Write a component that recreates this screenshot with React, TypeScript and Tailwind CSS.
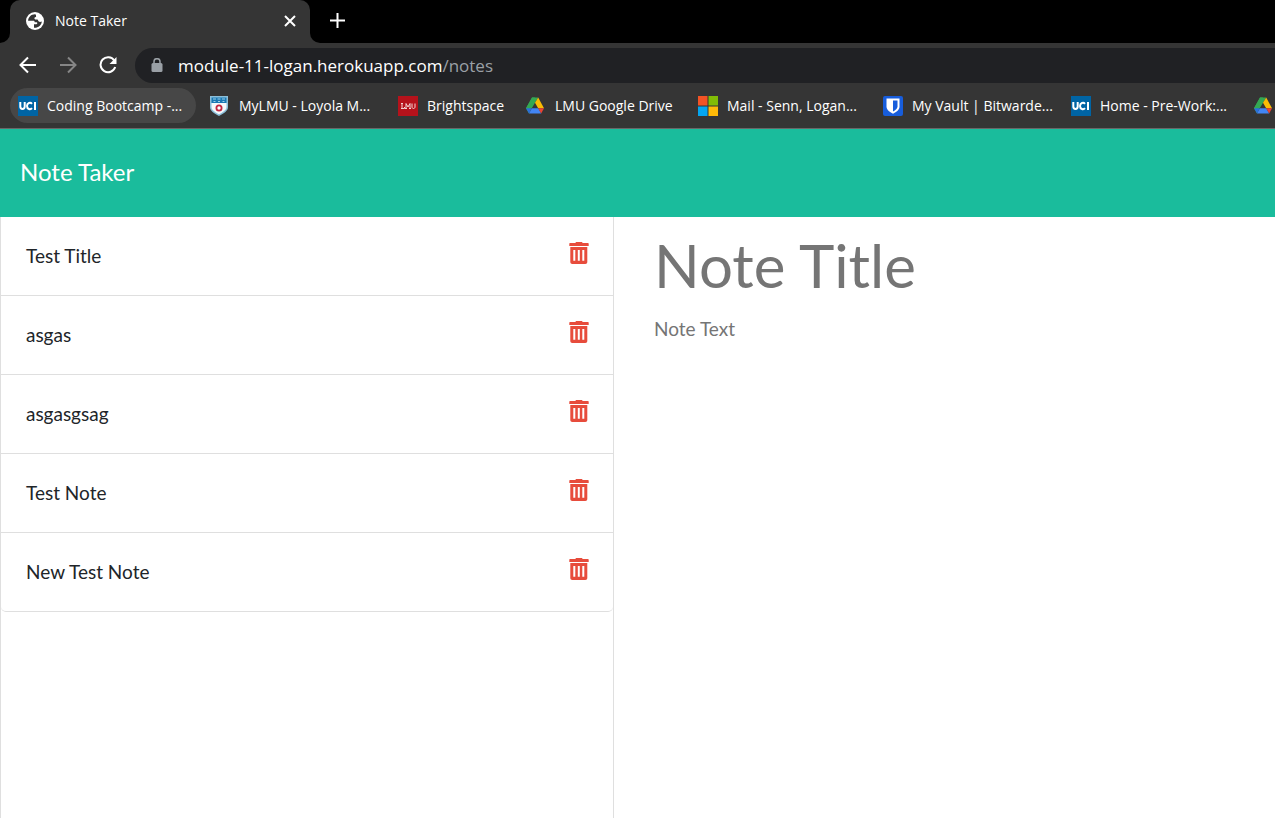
import type { ReactNode } from "react";

const chromeFont = "font-['Open_Sans','Noto_Sans',sans-serif]";

function Globe() {
  return (
    <svg viewBox="0 0 18 18" className="size-[18px] shrink-0" aria-hidden="true">
      <circle cx="9" cy="9" r="9" fill="#fff" />
      <path
        d="M9.3 2.2C5.3 2 2.2 5 2.1 8.7h5.1c1.2 0 1.5.7 1.5 1.6h1.9c1 0 1 1.9-.1 1.9H8v3.6c4 .4 7.6-2.5 7.8-6.3-.9.5-2.2.7-3 .1-.7-.5-.6-1.5-1.3-2-.8-.4-2.3.3-2.9-.7-.5-1 .3-1.6 1.1-1.8.7-.2.2-1.400.3-2.200z"
        fill="#353535"
      />
      <path d="M8 12.200 7.900 15.800C5 15.400 3.100 13.600 2.400 11Z" fill="#fff" />
    </svg>
  );
}

function Uci() {
  return (
    <svg viewBox="0 0 20 20" className="size-5 shrink-0" aria-hidden="true">
      <rect width="20" height="20" fill="#0064a4" />
      <g fill="none" stroke="#fff" strokeWidth="2">
        <path d="M2.300 6v4.600c0 3.200 4.400 3.200 4.400 0V6" />
        <path d="M14 7.800c-1.500-1.700-5-1.100-5 2.200s3.500 3.900 5 2.200" />
        <path d="M17 6v8" />
      </g>
    </svg>
  );
}

function Crest() {
  return (
    <svg viewBox="0 0 20 20" className="size-5 shrink-0" aria-hidden="true">
      <path d="M0 0h18v11c0 4-4 6.200-9 9-5-2.800-9-5-9-9z" fill="#8cbfda" />
      <path d="M1.500 7h15v4c0 3.200-3.500 5-7.500 7.300C5 16 1.500 14.200 1.500 11z" fill="#f4f8fb" />
      <path d="M1.500 1.500h15V7h-15z" fill="#1978b5" />
      <path d="M3 3h3M7.500 3h3M12 3h3M3.500 5.500h2M8 5.500h2M12.500 5.500h2" stroke="#9fd0e6" />
      <circle cx="9" cy="12" r="2.600" fill="#fff" stroke="#c22640" strokeWidth="1.800" />
    </svg>
  );
}

function Lmu() {
  return (
    <svg viewBox="0 0 20 20" className="size-5 shrink-0" aria-hidden="true">
      <rect width="20" height="20" fill="#b5121b" />
      <g fill="none" stroke="#f3d4d4" strokeWidth="1">
        <path d="M3 7.500h2M4 7.500v5M3 12.500h3.500v-1.500" />
        <path d="M8 12.500v-5l2 3.500 2-3.500v5M7 12.500h2M11 12.500h2" />
        <path d="M14 7.500v3.500c0 2 3 2 3 0V7.500" />
      </g>
    </svg>
  );
}

function Drive() {
  return (
    <svg viewBox="0 0 20 20" className="size-5 shrink-0" aria-hidden="true">
      <g transform="translate(-1)">
        <path d="M7 1.500h3L7 9.500 4 17.500 1 12.200z" fill="#34a853" />
        <path d="M7 1.500h6.200L10 6.800 6.800 12.200H1z" fill="#34a853" />
        <path d="M13.200 1.500 19 12.200h-5.800L10 6.800z" fill="#fbbc04" />
        <path d="M6.800 12.200h6.400l3 5.300H4z" fill="#4285f4" />
        <path d="M1 12.200h5.800L4 17.500z" fill="#2a6fdc" />
        <path d="M13.200 12.200H19l-2.800 5.300z" fill="#ea4335" />
      </g>
    </svg>
  );
}

function Microsoft() {
  return (
    <svg viewBox="0 0 20 20" className="size-5 shrink-0" aria-hidden="true">
      <path d="M0 0h9.500v9.500H0z" fill="#f35325" />
      <path d="M10.500 0H20v9.500h-9.500z" fill="#81bc06" />
      <path d="M0 10.500h9.500V20H0z" fill="#05a6f0" />
      <path d="M10.500 10.500H20V20h-9.500z" fill="#ffba08" />
    </svg>
  );
}

function Bitwarden() {
  return (
    <svg viewBox="0 0 20 20" className="size-5 shrink-0" aria-hidden="true">
      <rect width="20" height="20" rx="2" fill="#175ddc" />
      <path d="M3.500 2.500h13v8c0 3.200-3 5.500-6.500 7.300-3.500-1.800-6.500-4.100-6.500-7.300z" fill="#fff" />
      <path d="M10 4.500h4.500v6c0 2-2 3.700-4.500 5z" fill="#175ddc" />
    </svg>
  );
}

function Trash() {
  return (
    <svg viewBox="0 0 20 22" className="h-[22px] w-5" aria-hidden="true" fill="#e74c3c">
      <path d="M6.500 1c0-.6.400-1 1-1h5c.6 0 1 .4 1 1h5.500c.4 0 .7.300.7.700V4H.3V1.700c0-.4.300-.7.700-.7z" />
      <path
        fillRule="evenodd"
        d="M1.300 5h17v15c0 1.200-.8 2-2 2h-13c-1.200 0-2-.8-2-2zM4.300 8v10.800h2V8zM8.800 8v10.800h2V8zM13.300 8v10.800h2V8z"
      />
    </svg>
  );
}

type Bookmark = { label: string; icon: ReactNode; width: string; active?: boolean };

const bookmarks: Bookmark[] = [
  { label: "Coding Bootcamp -...", icon: <Uci />, width: "w-[186px]", active: true },
  { label: "MyLMU - Loyola M...", icon: <Crest />, width: "w-[182px]" },
  { label: "Brightspace", icon: <Lmu />, width: "w-[122px]" },
  { label: "LMU Google Drive", icon: <Drive />, width: "w-[166px]" },
  { label: "Mail - Senn, Logan...", icon: <Microsoft />, width: "w-[179px]" },
  { label: "My Vault | Bitwarde...", icon: <Bitwarden />, width: "w-[182px]" },
  { label: "Home - Pre-Work:...", icon: <Uci />, width: "w-[177px]" },
];

const notes = ["Test Title", "asgas", "asgasgsag", "Test Note", "New Test Note"];

function Browser() {
  return (
    <div className={`${chromeFont} bg-[#353535] text-sm text-white`}>
      <div className="flex h-[43px] items-stretch bg-black">
        <div className="w-[10px] bg-[#353535]">
          <div className="h-full rounded-br-[10px] bg-black" />
        </div>
        <div className="flex w-[300px] items-center rounded-t-[10px] bg-[#353535] pr-3 pb-[2px] pl-4">
          <Globe />
          <span className="ml-[11px] grow">Note Taker</span>
          <button aria-label="Close tab" className="flex size-4 items-center justify-center">
            <svg viewBox="0 0 12 12" className="size-3" stroke="#fff" strokeWidth="2">
              <path d="m1 1 10 10M11 1 1 11" />
            </svg>
          </button>
        </div>
        <div className="w-[10px] bg-[#353535]">
          <div className="h-full rounded-bl-[10px] bg-black" />
        </div>
        <button aria-label="New tab" className="flex w-[35px] items-center justify-center pb-[2px]">
          <svg viewBox="0 0 15 15" className="size-[15px]" stroke="#fff" strokeWidth="2">
            <path d="M7.500 0v15M0 7.500h15" />
          </svg>
        </button>
      </div>

      <div className="flex h-[45px] items-center pl-4">
        <button aria-label="Back" className="flex size-6 items-center justify-center pb-[2px]">
          <svg viewBox="0 0 18 18" className="size-[18px]" fill="none" stroke="#fff" strokeWidth="2">
            <path d="M17 9H2M9 1.500 1.500 9 9 16.500" />
          </svg>
        </button>
        <button aria-label="Forward" className="ml-4 flex size-6 items-center justify-center pb-[2px]">
          <svg viewBox="0 0 18 18" className="size-[18px]" fill="none" stroke="#868686" strokeWidth="2">
            <path d="M1 9h15M9 1.500 16.500 9 9 16.500" />
          </svg>
        </button>
        <button aria-label="Reload" className="ml-4 flex size-6 items-center justify-center pb-[2px]">
          <svg viewBox="0 0 18 18" className="size-[18px]" fill="none" stroke="#fff" strokeWidth="2">
            <path d="M15.300 4.500A7.500 7.500 0 1 0 16.200 11" />
            <path d="M17.500 1v7h-7z" fill="#fff" stroke="none" />
          </svg>
        </button>
        <div className="ml-[15px] flex h-[35px] grow items-center rounded-l-full bg-[#202124] pl-4">
          <svg viewBox="0 0 12 15" className="h-[15px] w-3" aria-hidden="true">
            <rect x="0.500" y="5" width="11" height="9" rx="1.500" fill="#9aa0a6" />
            <path d="M3 6V3.700a3 3 0 0 1 6 0V6" fill="none" stroke="#9aa0a6" strokeWidth="1.500" />
          </svg>
          <span className="ml-[15px] text-[17px] leading-6">
            module-11-logan.herokuapp.com<span className="text-[#9aa0a6]">/notes</span>
          </span>
        </div>
      </div>

      <nav className="flex h-[41px] items-start gap-[6px] overflow-hidden border-b border-[#686868] pl-[10px]">
        {bookmarks.map((b) => (
          <a
            key={b.label}
            href="#"
            className={`${b.width} ${b.active ? "bg-[#474747]" : ""} flex h-[35px] shrink-0 items-center gap-[9px] rounded-full px-2 whitespace-nowrap`}
          >
            {b.icon}
            {b.label}
          </a>
        ))}
        <a href="#" aria-label="Google Drive" className="flex h-[35px] shrink-0 items-center pl-2">
          <Drive />
        </a>
      </nav>
    </div>
  );
}

export default function App() {
  return (
    <div className="flex min-h-screen flex-col bg-white font-['Lato',sans-serif] text-[19px] text-[#212529]">
      <Browser />
      <header className="flex h-[88px] items-center bg-[#1abc9c] px-5 pb-[2px]">
        <a href="#" className="text-2xl text-white">
          Note Taker
        </a>
      </header>
      <main className="flex grow">
        <aside className="w-[614px] shrink-0 border-x border-[#dfdfdf]">
          <ul className="overflow-hidden rounded-b-[5px] border-b border-[#dfdfdf]">
            {notes.map((note) => (
              <li
                key={note}
                className="flex h-[79px] items-start justify-between border-b border-[#dfdfdf] px-[25px] pt-[25px] last:h-[78px] last:border-b-0"
              >
                <span className="leading-7">{note}</span>
                <button aria-label={`Delete ${note}`} className="-mr-px">
                  <Trash />
                </button>
              </li>
            ))}
          </ul>
        </aside>
        <section className="flex min-w-0 grow flex-col px-10 pt-3">
          <input
            aria-label="Note title"
            placeholder="Note Title"
            className="h-[72px] w-full text-6xl outline-none placeholder:text-[#757575]"
          />
          <textarea
            aria-label="Note text"
            placeholder="Note Text"
            className="mt-[14px] w-full grow resize-none leading-7 outline-none placeholder:text-[#757575]"
          />
        </section>
      </main>
    </div>
  );
}
